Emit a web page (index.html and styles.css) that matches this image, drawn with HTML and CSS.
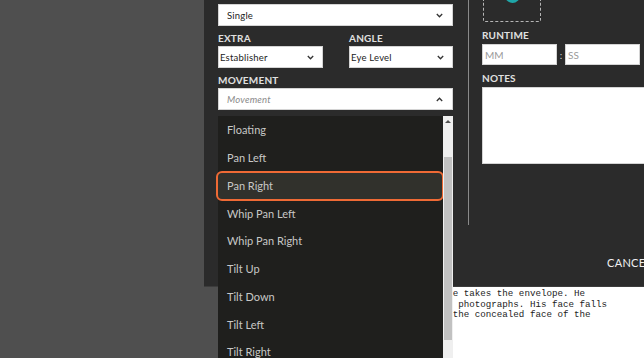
FILE: index.html
```html
<!DOCTYPE html>
<html lang="en">
<head>
    <meta charset="UTF-8">
    <meta name="viewport" content="width=device-width, initial-scale=1.0">
    <title>Shot details</title>
    <link rel="stylesheet" href="styles.css">
</head>
<body>
    <div class="script-page">
        <div class="script-line">Vincent nods. He takes the envelope. He</div>
        <div class="script-line">pulls out three photographs. His face falls</div>
        <div class="script-line">as he looks at the concealed face of the</div>
    </div>

    <div class="modal">
        <div class="modal-body">
            <div class="col-left">
                <div class="select select-wide">
                    <span>Single</span>
                    <svg class="chev" width="7" height="5" viewBox="0 0 7 5"><polyline points="0.8,1 3.5,3.8 6.2,1" /></svg>
                </div>

                <div class="pair">
                    <div class="field">
                        <div class="label">EXTRA</div>
                        <div class="select select-small">
                            <span>Establisher</span>
                            <svg class="chev" width="7" height="5" viewBox="0 0 7 5"><polyline points="0.8,1 3.5,3.8 6.2,1" /></svg>
                        </div>
                    </div>
                    <div class="field">
                        <div class="label">ANGLE</div>
                        <div class="select select-small">
                            <span>Eye Level</span>
                            <svg class="chev" width="7" height="5" viewBox="0 0 7 5"><polyline points="0.8,1 3.5,3.8 6.2,1" /></svg>
                        </div>
                    </div>
                </div>

                <div class="label">MOVEMENT</div>
                <div class="select select-wide">
                    <span class="placeholder">Movement</span>
                    <svg class="chev" width="7" height="5" viewBox="0 0 7 5"><polyline points="0.8,4 3.5,1.2 6.2,4" /></svg>
                </div>
            </div>

            <div class="divider"></div>

            <div class="col-right">
                <div class="upload">
                    <div class="avatar-dot"></div>
                </div>
                <div class="label label-right">RUNTIME</div>
                <div class="runtime">
                    <div class="input"><span class="placeholder-plain">MM</span></div>
                    <span class="colon">:</span>
                    <div class="input"><span class="placeholder-plain">SS</span></div>
                </div>
                <div class="label label-right">NOTES</div>
                <div class="notes"></div>
            </div>
        </div>

        <div class="modal-footer">
            <span class="btn-text">CANCEL</span>
        </div>

        <div class="dropdown">
            <ul class="options">
                <li>Floating</li>
                <li>Pan Left</li>
                <li class="active">Pan Right</li>
                <li>Whip Pan Left</li>
                <li>Whip Pan Right</li>
                <li>Tilt Up</li>
                <li>Tilt Down</li>
                <li>Tilt Left</li>
                <li>Tilt Right</li>
            </ul>
            <div class="scrollbar">
                <div class="scroll-up"></div>
                <div class="scroll-thumb"></div>
            </div>
        </div>
    </div>
</body>
</html>
```

FILE: styles.css
```css
body {
    margin: 0;
    width: 644px;
    height: 358px;
    overflow: hidden;
    position: relative;
    background: #4f4f4f;
    font-family: 'Lato', 'Open Sans', sans-serif;
}

/* the script page behind the dialog */
.script-page {
    margin-left: 340px;
    padding: 289px 0 0 30px;
    height: 100%;
    box-sizing: border-box;
    background: #fff;
}

.script-line {
    font-family: 'Liberation Mono', 'DejaVu Sans Mono', monospace;
    font-size: 9.2px;
    line-height: 10.7px;
    color: #222;
    white-space: pre;
}

.modal {
    position: absolute;
    left: 204px;
    top: 0;
    width: 480px;
    height: 287px;
    box-sizing: border-box;
    background: #2b2b2b;
    border-bottom: 1px solid #3c3c3c;
    display: flex;
    flex-direction: column;
}

.modal-body {
    display: flex;
    padding-left: 14px;
}

.col-left {
    width: 235px;
    padding-top: 4px;
}

.divider {
    width: 1px;
    height: 225px;
    background: #8a8a8a;
    margin: 0 13px 0 15px;
}

.col-right {
    width: 200px;
}

.label {
    color: #e0e0e0;
    font-size: 10px;
    font-weight: 700;
    letter-spacing: 0.2px;
    padding-top: 4px;
    line-height: 16px;
}

.label-right {
    line-height: 18px;
}

.select {
    height: 22px;
    box-sizing: border-box;
    background: #fff;
    border: 1px solid #d4d4d4;
    display: flex;
    align-items: center;
    justify-content: space-between;
    font-size: 9.5px;
    color: #222;
    letter-spacing: 0.2px;
}

.select-wide {
    padding: 0 9px 0 8px;
}

.select-small {
    padding: 0 8px 0 1px;
}

.chev {
    display: block;
}

.chev polyline {
    fill: none;
    stroke: #333;
    stroke-width: 1.3;
}

.placeholder {
    font-style: italic;
    color: #8a8a8a;
}

.pair {
    display: flex;
    gap: 26px;
}

.pair .field:first-child {
    width: 105px;
}

.pair .field:last-child {
    width: 104px;
}

.upload {
    position: relative;
    width: 58px;
    height: 22px;
    margin-left: 1px;
    box-sizing: border-box;
    border: 1px dashed #b5b5b5;
    border-top: none;
    border-radius: 0 0 2px 2px;
}

.avatar-dot {
    position: absolute;
    left: 21px;
    top: -12px;
    width: 15px;
    height: 15px;
    border-radius: 50%;
    background: #1fa6a8;
}

.runtime {
    display: flex;
    align-items: center;
}

.input {
    width: 75px;
    height: 21px;
    box-sizing: border-box;
    background: #fff;
    border: 1px solid #d4d4d4;
    display: flex;
    align-items: center;
    padding-left: 2px;
}

.placeholder-plain {
    font-size: 10px;
    color: #9a9a9a;
}

.colon {
    width: 8px;
    text-align: center;
    color: #cfcfcf;
    font-size: 10px;
}

.notes {
    width: 200px;
    height: 77px;
    box-sizing: border-box;
    background: #fff;
    border: 1px solid #d4d4d4;
}

.modal-footer {
    margin-top: auto;
    padding: 0 0 16px 403px;
}

.btn-text {
    color: #f0f0f0;
    font-size: 11px;
    line-height: 14px;
    letter-spacing: 0.3px;
}

/* open movement list */
.dropdown {
    position: absolute;
    left: 14px;
    top: 116px;
    width: 235px;
    height: 260px;
    background: #1f1f1d;
    display: flex;
}

.options {
    list-style: none;
    margin: 0;
    padding: 0;
    flex: 1;
}

.options li {
    height: 27.75px;
    line-height: 27.75px;
    padding-left: 9px;
    font-size: 11px;
    color: #c8c8c6;
}

.options li.active {
    height: 26px;
    line-height: 26px;
    margin: -1px -1px -1px -2px;
    border: 2px solid #ef6a35;
    border-radius: 6px;
    background: #31312c;
}

.scrollbar {
    width: 10px;
    background: #efefef;
    position: relative;
}

.scroll-up {
    width: 0;
    height: 0;
    margin: 4px auto 0;
    border-left: 3px solid transparent;
    border-right: 3px solid transparent;
    border-bottom: 3px solid #505050;
}

.scroll-thumb {
    margin: 34px 1px 0 1px;
    height: 183px;
    background: #c1c1c1;
}
```
